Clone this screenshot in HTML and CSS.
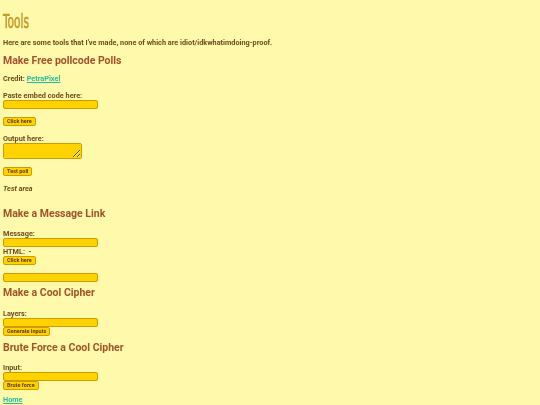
FILE: index.html
```html
<!DOCTYPE html>
<html>
<head>
<meta charset="utf-8">
<link rel="stylesheet" href="styles.css">
</head>
<body>
<h1 class="title">Tools</h1>
<p class="intro">Here are some tools that I've made, none of which are idiot/idkwhatimdoing-proof.</p>

<h2 class="head">Make Free pollcode Polls</h2>
<p class="line">Credit: <a href="#" class="link">PetraPixel</a></p>
<div class="label gap-top">Paste embed code here:</div>
<input class="field" type="text">
<div class="spacer"></div>
<button class="btn">Click here</button>
<div class="label gap-top">Output here:</div>
<textarea class="area"></textarea>
<div class="spacer"></div>
<button class="btn">Test poll</button>
<p class="test">Test area</p>

<h2 class="head h-msg">Make a Message Link</h2>
<div class="label">Message:</div>
<input class="field" type="text">
<div class="label">HTML: &nbsp;-</div>
<button class="btn">Click here</button>
<div class="spacer"></div>
<input class="field" type="text">

<h2 class="head h-cipher">Make a Cool Cipher</h2>
<div class="label">Layers:</div>
<input class="field" type="text">
<button class="btn">Generate Inputs</button>

<h2 class="head h-brute">Brute Force a Cool Cipher</h2>
<div class="label">Input:</div>
<input class="field" type="text">
<button class="btn">Brute force</button>
<p class="home"><a href="#" class="link">Home</a></p>
</body>
</html>
```

FILE: styles.css
```css
html, body {
  margin: 0;
  padding: 0;
  background: #fffaab;
}
body {
  padding: 0 3px;
  font-family: Roboto, "Open Sans", sans-serif;
  color: #6e4a1d;
  font-size: 7.3px;
  line-height: 9px;
}
.title {
  font-family: "DejaVu Sans Condensed", "Liberation Sans Narrow", sans-serif;
  font-weight: normal;
  color: #c49a28;
  font-size: 19px;
  line-height: 20px;
  margin: 11px 0 0 0;
  transform: scaleX(0.62);
  transform-origin: left;
  -webkit-text-stroke: 0.6px #c49a28;
}
.intro {
  margin: 7px 0 0 0;
  font-weight: 700;
}
.head {
  color: #a0522d;
  font-family: Roboto, "Open Sans", sans-serif;
  font-size: 10.5px;
  line-height: 14px;
  font-weight: 700;
  margin: 7px 0 0 0;
}
.line {
  font-weight: 700;
  margin: 6px 0 0 0;
}
.label {
  font-weight: 700;
}
.gap-top {
  margin-top: 8px;
}
.link {
  color: #1fbf9f;
  text-decoration: underline;
}
.field {
  display: block;
  box-sizing: border-box;
  width: 95px;
  height: 9px;
  margin: 0;
  padding: 0;
  background: #ffd300;
  border: 1px solid #d19a00;
  border-radius: 2px;
}
.area {
  display: block;
  box-sizing: border-box;
  width: 79px;
  height: 16px;
  margin: 0;
  padding: 0;
  background: #ffd300;
  border: 1px solid #d19a00;
  border-radius: 2px;
  resize: both;
}
.spacer {
  height: 8px;
}
.btn {
  display: block;
  box-sizing: border-box;
  height: 9px;
  margin: 0;
  padding: 0 3px;
  font-family: Roboto, "Open Sans", sans-serif;
  font-size: 5.5px;
  line-height: 7px;
  font-weight: 700;
  color: #5e3e12;
  background: #ffd300;
  border: 1px solid #d19a00;
  border-radius: 2px;
}
.test {
  font-style: italic;
  font-weight: 700;
  margin: 8px 0 0 0;
}
.h-msg {
  margin-top: 14px;
  margin-bottom: 8px;
}
.h-cipher {
  margin-top: 4px;
  margin-bottom: 9px;
}
.h-brute {
  margin-top: 5px;
  margin-bottom: 8px;
}
.home {
  margin: 5px 0 0 0;
  font-weight: 700;
}
```
